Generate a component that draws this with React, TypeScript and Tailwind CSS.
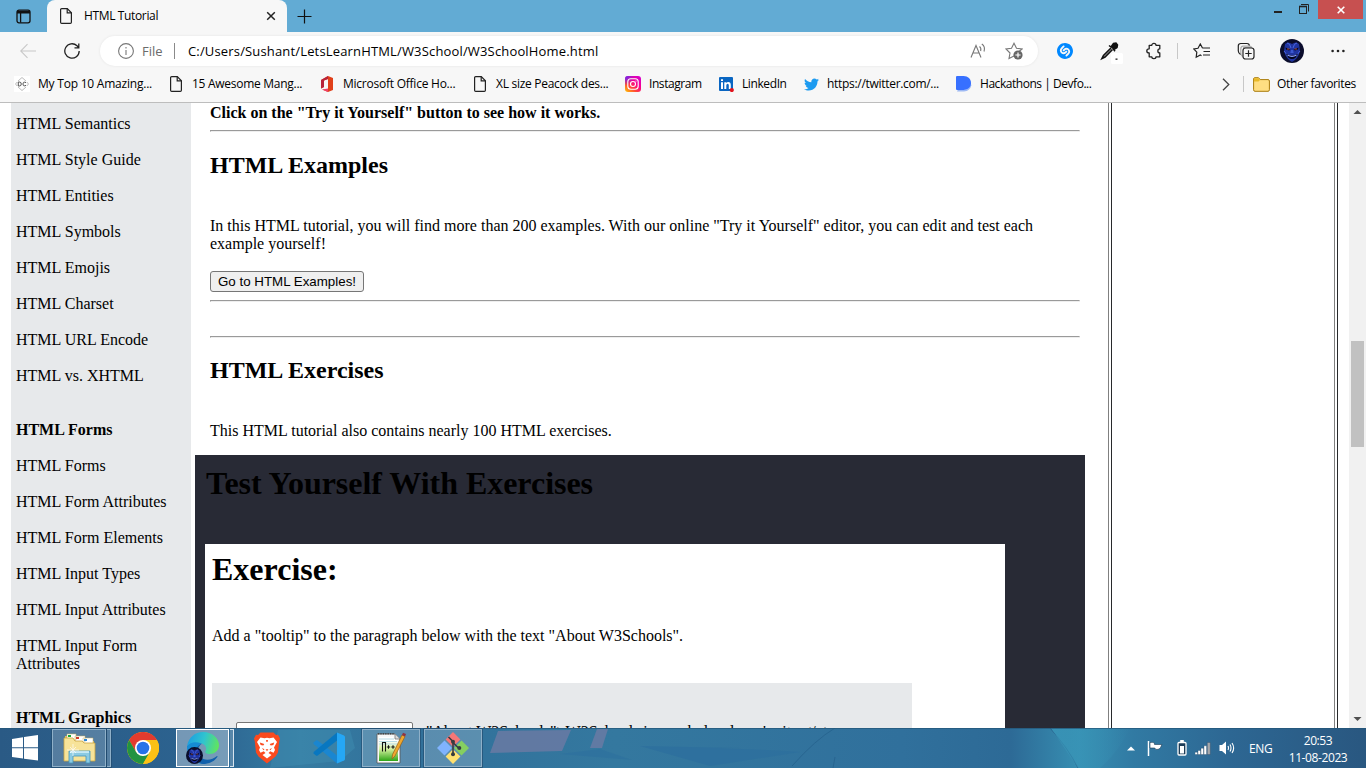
import React from "react";
import { SiShazam } from "react-icons/si";
import { FaTwitter } from "react-icons/fa";

const PageIcon = () => (
  <svg width="16" height="16" viewBox="0 0 16 16" fill="none" stroke="#222" strokeWidth="1.2">
    <path d="M2.6 1.8Q2.6.7 3.7.7H9.3L13.4 4.8V14.2Q13.4 15.3 12.3 15.3H3.7Q2.6 15.3 2.6 14.2Z" />
    <path d="M9.2.8V4.9H13.3" />
  </svg>
);

const OfficeIcon = () => (
  <svg width="16" height="16" viewBox="0 0 16 16">
    <path d="M9 0L14 2V14L9 16 3 13.6 9 14V3L5 4.4V11L2 12.6V4Z" fill="#e0401a" />
    <path d="M9 0L2 4V12.6L5 11V4.4L9 3Z" fill="#b8233a" />
    <path d="M3 13.6L9 12.6V16Z" fill="#f0406a" />
  </svg>
);

const InstagramIcon = () => (
  <svg width="16" height="16" viewBox="0 0 16 16">
    <defs>
      <linearGradient id="ig" x1="0" y1="1" x2="0.8" y2="0">
        <stop offset="0" stopColor="#ffc800" />
        <stop offset=".35" stopColor="#ff4a38" />
        <stop offset=".65" stopColor="#f9008c" />
        <stop offset="1" stopColor="#d800c8" />
      </linearGradient>
      <radialGradient id="ig2" cx="0" cy="0" r=".6">
        <stop offset="0" stopColor="#5a2cff" />
        <stop offset="1" stopColor="#5a2cff" stopOpacity="0" />
      </radialGradient>
    </defs>
    <rect width="16" height="16" rx="3" fill="url(#ig)" />
    <rect width="16" height="16" rx="3" fill="url(#ig2)" />
    <rect x="2.8" y="2.8" width="10.4" height="10.4" rx="3" fill="none" stroke="#fff" strokeWidth="1.1" />
    <circle cx="8" cy="8" r="2.5" fill="none" stroke="#fff" strokeWidth="1.1" />
    <circle cx="11" cy="5" r=".6" fill="#fff" />
  </svg>
);

const LinkedInIcon = () => (
  <svg width="16" height="16" viewBox="0 0 16 16">
    <rect x="1" y="1" width="14" height="14" rx="1" fill="#0a66c2" />
    <path d="M3 6.2H5V13H3ZM3 3.2H5V5.1H3ZM6.3 6.2H8.2V7.1Q8.8 6 10.3 6 12.8 6 12.8 9V13H10.8V9.3Q10.8 7.8 9.7 7.8 8.3 7.8 8.3 9.5V13H6.3Z" fill="#fff" />
    <circle cx="13.8" cy="14" r="2.1" fill="#e1131d" />
  </svg>
);

const DevfolioIcon = () => (
  <svg width="16" height="16" viewBox="0 0 16 16">
    <path d="M2 13.5L1 15.5H8Q14 15 15.5 9L14.6 8Q13 14 8 14Z" fill="#9db9f4" />
    <path d="M0 1Q0 0 1 0H7.5C12 0 15 3 15 7S12 14 7.5 14H1Q0 14 0 13Z" fill="#3770ff" />
  </svg>
);

const DcIcon = () => (
  <svg width="16" height="16" viewBox="0 0 16 16" fill="none">
    <rect width="16" height="16" fill="#fff" />
    <path d="M4 5L8 1.5 12 5M4 11L8 14.5 12 11M3.2 6L1.5 8 3.2 10M12.8 6L14.5 8 12.8 10" stroke="#aaa" strokeWidth=".8" />
    <path d="M4.3 6V10H5.3Q7.3 10 7.3 8T5.3 6ZM12 6.6Q9 5.2 9 8T12 9.4" stroke="#555" strokeWidth="1" />
  </svg>
);

const bookmarks: { label: string; icon: React.ReactNode; cls: string; text: string }[] = [
  { label: "My Top 10 Amazing...", icon: <DcIcon />, cls: "w-[154px]", text: "tracking-[-0.22px]" },
  { label: "15 Awesome Mang...", icon: <PageIcon />, cls: "w-[151px]", text: "tracking-[-0.28px]" },
  { label: "Microsoft Office Ho...", icon: <OfficeIcon />, cls: "w-[153px]", text: "tracking-[-0.24px]" },
  { label: "XL size Peacock des...", icon: <PageIcon />, cls: "w-[153px]", text: "tracking-[-0.28px]" },
  { label: "Instagram", icon: <InstagramIcon />, cls: "w-[93px]", text: "tracking-[-0.42px]" },
  { label: "LinkedIn", icon: <LinkedInIcon />, cls: "w-[85px]", text: "tracking-[-0.4px]" },
  { label: "https://twitter.com/...", icon: <FaTwitter size={15} color="#1d9bf0" />, cls: "w-[153px]", text: "tracking-[-0.3px]" },
  { label: "Hackathons | Devfo...", icon: <DevfolioIcon />, cls: "w-[262px]", text: "tracking-[-0.46px]" },
];

const BlueFace = ({ size }: { size: number }) => (
  <svg width={size} height={size} viewBox="0 0 24 24">
    <circle cx="12" cy="12" r="12" fill="#0b0d2c" />
    <path d="M5 5Q8 2 12 5 16 2 19 5L20 12Q18 20 12 23 6 20 4 12Z" fill="#2034a0" />
    <path d="M7 4Q10 4 11 9M17 4Q14 4 13 9M4 12Q7 15 8 18M20 12Q17 15 16 18" stroke="#4a66e0" strokeWidth="1" fill="none" />
    <path d="M5.5 8.5L10.5 10.5 9 11.5 6 10.5ZM18.5 8.5L13.5 10.5 15 11.5 18 10.5Z" fill="#04051a" />
    <path d="M7 10H9.5M14.5 10H17" stroke="#c2583c" strokeWidth=".9" />
    <path d="M11 11L10.3 14H13.7L13 11" fill="#3c58d0" />
    <path d="M6 14.5Q12 18.5 18 14.5 16 20 12 20T6 14.5Z" fill="#04051a" />
    <path d="M7.5 16Q12 18.7 16.5 16" stroke="#8fa4ff" strokeWidth="1.2" fill="none" />
  </svg>
);

const TitleBar = () => (
  <div className="flex h-8 bg-[#62abd4]">
    <div className="flex w-[47px] items-center justify-center">
      <svg width="15" height="15" viewBox="0 0 15 15" fill="none" stroke="#111" strokeWidth="1.3">
        <rect x="1" y="1.2" width="13" height="12.6" rx="2" />
        <path d="M1 3.2H14" strokeWidth="2.6" />
        <path d="M4.6 4V13.6" />
      </svg>
    </div>
    <div className="flex w-60 items-center rounded-t-lg bg-[#f7f7f7] pl-[11px]">
      <PageIcon />
      <span className="ml-[10px] w-[182px] text-[12px] tracking-[-0.36px]">HTML Tutorial</span>
      <svg width="10" height="10" viewBox="0 0 10 10" stroke="#222" strokeWidth="1.5"><path d="M1.2 1.2L8.8 8.8M8.8 1.2L1.2 8.8" /></svg>
    </div>
    <div className="flex grow items-center pl-[10px]">
      <svg width="15" height="15" viewBox="0 0 15 15" stroke="#111" strokeWidth="1.2"><path d="M7.5.5V14.5M.5 7.5H14.5" /></svg>
    </div>
    <div className="flex h-[19px]">
      <svg className="mr-[17px]" width="8" height="19" viewBox="0 0 8 19" fill="#222"><rect y="11" width="8" height="2" /></svg>
      <svg className="mr-[9px]" width="10" height="19" viewBox="0 0 10 19" fill="none" stroke="#222"><path d="M2 4.5H9.5V11.5" /><rect x=".5" y="6.5" width="7" height="7" /><path d="M0 6.5H8" strokeWidth="1.6" /></svg>
      <div className="flex w-[45px] items-center justify-center bg-[#c75050]">
        <svg width="8" height="8" viewBox="0 0 8 8" stroke="#fff" strokeWidth="1.6"><path d="M.7.7L7.3 7.3M7.3.7L.7 7.3" /></svg>
      </div>
      <div className="w-[3px]" />
    </div>
  </div>
);

const Toolbar = () => (
  <div className="flex h-[38px] items-center bg-[#f7f7f7]">
    <div className="flex w-[100px] items-center pl-5">
      <svg width="16" height="16" viewBox="0 0 16 16" fill="none" stroke="#c8c8c8" strokeWidth="1.1"><path d="M16 8H.8M7.5 1.2L.7 8 7.5 14.8" /></svg>
      <svg className="ml-7" width="16" height="16" viewBox="0 0 16 16" fill="none" stroke="#222" strokeWidth="1.3"><path d="M15.2 8A7.2 7.2 0 1 1 13 2.8L14.6 4.5M14.8.5V4.8H10.5" /></svg>
    </div>
    <div className="flex h-[30px] w-[938px] items-center rounded-full bg-white pl-[18px] text-[13px] shadow-[0_0_3px_rgba(0,0,0,0.08)]">
      <svg width="16" height="16" viewBox="0 0 16 16" fill="none" stroke="#777" strokeWidth="1.1"><circle cx="8" cy="8" r="7.4" /><path d="M8 7V12M8 4V5.4" /></svg>
      <span className="ml-2 w-8 pt-[2px] text-[#6b6b6b]">File</span>
      <div className="h-4 w-px bg-[#8a8a8a]" />
      <span className="ml-[13px] w-[782px] pt-[2px] tracking-[0.16px]">C:/Users/Sushant/LetsLearnHTML/W3School/W3SchoolHome.html</span>
      <svg width="17" height="16" viewBox="0 0 17 16" fill="none" stroke="#777" strokeWidth="1.1"><path d="M1 14.5L6 2.5 11 14.5M3 10H9M9.5 3.5Q11.5 5 10.6 8M11.8 1Q15.6 3.5 14 8.5" /></svg>
      <svg className="ml-[18px]" width="18" height="18" viewBox="0 0 18 18"><path d="M9 14L4 16.5 5 11 1 7 6.5 6.2 9 1.3 11.5 6.2 17 7 14 9.5" fill="none" stroke="#777" strokeWidth="1.1" /><circle cx="13" cy="13" r="4.6" fill="#666" /><path d="M13 10.4V15.6M10.4 13H15.6" stroke="#fff" strokeWidth="1.2" /></svg>
    </div>
    <div className="ml-[5px] flex w-11 justify-center"><SiShazam size={16} color="#0088ff" /></div>
    <div className="ml-px flex w-11 justify-center">
      <svg width="26" height="26" viewBox="0 0 26 26"><path d="M14 10L6.5 17.5 5 20.5 8 19 15.5 11.5" fill="#ccc" stroke="#111" strokeWidth="1.6" /><path d="M12 7.5L14 9 16.5 5.5 19 5 20.5 7 20 9.5 16.8 11.6 18 13.2" fill="#111" stroke="#111" strokeWidth="1.5" /><rect x="14" y="15" width="12" height="11" rx="1.5" fill="#fff" /><rect x="18.5" y="20.5" width="2" height="1.3" fill="#222" /></svg>
    </div>
    <div className="flex w-11 justify-center">
      <svg width="18" height="18" viewBox="0 0 18 18" fill="none" stroke="#222" strokeWidth="1.3" strokeLinejoin="round"><path d="M4.2 3.3H6.8C6.8.8 11 .8 11 3.3H14.8V6.8C12.2 6.8 12.2 11 14.8 11V14.8H11C11 17.3 6.8 17.3 6.8 14.8H4.2V11C1 11 1 6.8 4.2 6.8Z" /></svg>
    </div>
    <div className="ml-px h-4 w-px bg-[#c8c8c8]" />
    <div className="ml-[2px] flex w-11 justify-center">
      <svg width="18" height="16" viewBox="0 0 18 16" fill="none" stroke="#222" strokeWidth="1.2"><path d="M9.6 5.2L7.3 1 5 5.3.8 6 3.8 9.2 3.2 14.2 7.3 12 8.5 12.7M9.7 5H17M10.5 8.5H17M10 12H17" /></svg>
    </div>
    <div className="flex w-11 justify-center">
      <svg width="18" height="18" viewBox="0 0 18 18" fill="none" stroke="#222" strokeWidth="1.2"><path d="M3.5 12.5Q1.5 11.5 1.3 9V3.8Q1.4 1.5 3.8 1.5H10Q12 1.5 12.5 3.5" /><path d="M6 5.5H14M5.5 14.5Q3.8 13.5 3.8 11V7Q3.8 4.2 6.2 4.2H12.5Q14.2 4.2 14.8 6" opacity=".35" /><rect x="6" y="6" width="11" height="11" rx="2.5" fill="#f7f7f7" /><path d="M11.5 8.3V14.7M8.3 11.5H14.7" /></svg>
    </div>
    <div className="ml-[2px] flex w-11 justify-center"><BlueFace size={24} /></div>
    <div className="ml-[2px] flex w-11 justify-center">
      <svg width="14" height="4" viewBox="0 0 14 4" fill="#222"><circle cx="1.6" cy="2" r="1.3" /><circle cx="7" cy="2" r="1.3" /><circle cx="12.4" cy="2" r="1.3" /></svg>
    </div>
  </div>
);

const BookmarkBar = () => (
  <div className="flex h-[33px] items-center border-b border-[#bdbdbd] bg-[#f7f7f7] pb-1 pl-[14px] text-[12px] whitespace-nowrap">
    {bookmarks.map((b) => (
      <div key={b.label} className={`flex shrink-0 items-center ${b.cls}`}>
        <span className="mr-2 flex w-4 justify-center">{b.icon}</span>
        <span className={b.text}>{b.label}</span>
      </div>
    ))}
    <svg className="ml-1" width="8" height="13" viewBox="0 0 8 13" fill="none" stroke="#444" strokeWidth="1.3"><path d="M1 .7L6.8 6.5 1 12.3" /></svg>
    <div className="ml-[13px] h-4 w-px bg-[#c8c8c8]" />
    <svg className="ml-[9px]" width="17" height="15" viewBox="0 0 17 15"><path d="M.6 2Q.6.7 2 .7H5.5L7.2 2.6H15Q16.4 2.6 16.4 4V12.8Q16.4 14.3 15 14.3H2Q.6 14.3.6 12.8Z" fill="#ffde82" stroke="#a97c0c" strokeWidth="1" /><path d="M1 1.2H5.5L7 2.9 5.5 4.6H1Z" fill="#e8b928" /></svg>
    <span className="ml-[7px] tracking-[-0.36px]">Other favorites</span>
  </div>
);

const sidebarTop = ["HTML Semantics", "HTML Style Guide", "HTML Entities", "HTML Symbols", "HTML Emojis", "HTML Charset", "HTML URL Encode", "HTML vs. XHTML"];
const sidebarForms = ["HTML Forms", "HTML Form Attributes", "HTML Form Elements", "HTML Input Types", "HTML Input Attributes", "HTML Input Form Attributes"];

const Sidebar = () => (
  <nav className="ml-[11px] flex w-[180px] shrink-0 flex-col gap-[18px] bg-[#e7e9eb] px-[5px] pt-3">
    {sidebarTop.map((s) => <div key={s}>{s}</div>)}
    <div className="mt-[18px] font-bold">HTML Forms</div>
    {sidebarForms.map((s) => <div key={s} className="w-[155px]">{s}</div>)}
    <div className="mt-[18px] font-bold">HTML Graphics</div>
  </nav>
);

const Rule = ({ cls }: { cls: string }) => (
  <div className={`h-[2px] w-[870px] border border-t-[#9a9a9a] border-r-[#eee] border-b-[#eee] border-l-[#9a9a9a] ${cls}`} />
);

const Main = () => (
  <main className="ml-1 w-[890px] shrink-0">
    <div className="h-[352px] pt-px pl-[15px]">
      <p className="font-bold">Click on the "Try it Yourself" button to see how it works.</p>
      <Rule cls="mt-2" />
      <h2 className="mt-5 text-[24px] leading-[27px] font-bold">HTML Examples</h2>
      <p className="mt-[38px] w-[850px]">In this HTML tutorial, you will find more than 200 examples. With our online "Try it Yourself" editor, you can edit and test each example yourself!</p>
      <button className="mt-[18px] block h-[21px] w-[154px] rounded-[3px] border border-[#767676] bg-[#efefef] text-center font-['Liberation_Sans',sans-serif] text-[13.333px] leading-[19px] whitespace-nowrap">Go to HTML Examples!</button>
      <Rule cls="mt-2" />
      <Rule cls="mt-[34px]" />
      <h2 className="mt-[19px] text-[24px] leading-[27px] font-bold">HTML Exercises</h2>
      <p className="mt-[38px]">This HTML tutorial also contains nearly 100 HTML exercises.</p>
    </div>
    <section className="h-[300px] bg-[#282a35] pt-[10px] pl-[10px]">
      <h1 className="pl-px text-[32px] leading-[37px] font-bold tracking-[-0.03px]">Test Yourself With Exercises</h1>
      <div className="mt-[42px] h-[220px] w-[800px] bg-white pt-[7px] pl-[7px]">
        <h1 className="text-[32px] leading-[37px] font-bold">Exercise:</h1>
        <p className="mt-[39px]">Add a "tooltip" to the paragraph below with the text "About W3Schools".</p>
        <div className="mt-[38px] flex h-[120px] w-[700px] items-start bg-[#e7e9eb] pt-[39px] pl-6">
          <div className="h-[21px] w-[177px] rounded-[2px] border border-[#767676] bg-white" />
          <span className="ml-1 pt-px whitespace-nowrap">="About W3Schools"&gt;W3Schools is a web developer's site.&lt;/p&gt;</span>
        </div>
      </div>
    </section>
  </main>
);

const ScrollBar = () => (
  <div className="ml-auto flex w-[17px] shrink-0 flex-col items-center bg-[#f1f1f1]">
    <svg width="17" height="17" viewBox="0 0 17 17" fill="#505050"><path d="M4.5 11L8.5 7 12.5 11Z" /></svg>
    <div className="mt-[221px] mr-px h-[106px] w-[13px] bg-[#c1c1c1]" />
    <svg className="mt-auto" width="17" height="17" viewBox="0 0 17 17" fill="#505050"><path d="M4.5 6L8.5 10 12.5 6Z" /></svg>
  </div>
);

const TaskArt = () => (
  <svg className="absolute inset-0" width="1366" height="40" viewBox="0 0 1366 40" preserveAspectRatio="none">
    <defs>
      <linearGradient id="tb" x1="0" x2="1" y1="0" y2="0">
        <stop offset="0" stopColor="#2a5a85" />
        <stop offset=".15" stopColor="#2c6390" />
        <stop offset=".22" stopColor="#367ca2" />
        <stop offset=".3" stopColor="#31709a" />
        <stop offset=".45" stopColor="#34789f" />
        <stop offset=".66" stopColor="#30709c" />
        <stop offset=".74" stopColor="#2d6a96" />
        <stop offset=".79" stopColor="#378fb2" />
        <stop offset=".83" stopColor="#317aa3" />
        <stop offset=".9" stopColor="#2d6793" />
        <stop offset="1" stopColor="#295780" />
      </linearGradient>
      <linearGradient id="tb2" x1="0" x2="1" y1="0" y2="0">
        <stop offset="0" stopColor="#3997b9" stopOpacity=".8" />
        <stop offset="1" stopColor="#3997b9" stopOpacity="0" />
      </linearGradient>
    </defs>
    <rect width="1366" height="40" fill="url(#tb)" />
    <path d="M278 2H350L355 20 340 33 270 40Z" fill="#3e8bb0" opacity=".5" />
    <path d="M498 3L571 2 562 23 490 25Z" fill="#667aa3" opacity=".9" />
    <path d="M597 1H608L602 20H590Z" fill="#667aa3" opacity=".9" />
    <path d="M640 18Q720 19 800 24L710 38Z" fill="#2d6f9e" opacity=".8" />
    <path d="M560 26L600 21 632 32Z" fill="#2d6f9e" opacity=".6" />
    <path d="M835 0Q815 12 792 38M835 29L833 40M1050 0Q1068 20 1078 40" stroke="#286590" fill="none" />
    <path d="M1051 0H1130Q1120 22 1100 40H1078Z" fill="url(#tb2)" />
    <path d="M0 .5H1366" stroke="#245678" opacity=".7" />
  </svg>
);

const TaskButton = ({ children, cls }: { children: React.ReactNode; cls: string }) => (
  <div className={`flex h-[38px] shrink-0 items-center justify-center border border-[#8fb0c8] bg-white/20 outline outline-1 outline-[#1f486b]/60 ${cls}`}>{children}</div>
);

const ExplorerIcon = () => (
  <svg width="33" height="32" viewBox="0 0 33 32">
    <path d="M2 4H12V9H31V27H2Z" fill="#e4bf5c" />
    <path d="M4 2H13V8H4ZM12 4H22V10H12ZM20 6H30V12H20Z" fill="#fff" stroke="#c9b060" strokeWidth=".5" />
    <rect x="5" y="3" width="3" height="2" fill="#1ba838" />
    <rect x="13" y="5" width="3" height="2" fill="#d03c28" />
    <rect x="21" y="7" width="3" height="2" fill="#2c88d8" />
    <path d="M1 6H10L12 9H19L21 11H32V29H1Z" fill="#f7e399" stroke="#caa53f" strokeWidth=".8" />
    <path d="M6 19H27V31H23V24H10V31H6Z" fill="#8ccbe3" stroke="#4396bb" strokeWidth=".8" />
    <path d="M7 20H26" stroke="#d8f3fb" strokeWidth="1.5" />
    <path d="M10 12V24M4 18H16M7 15L13 21M13 15L7 21" stroke="#fff" strokeWidth=".8" opacity=".85" />
  </svg>
);

const ChromeIcon = () => (
  <svg width="32" height="32" viewBox="0 0 32 32">
    <circle cx="16" cy="16" r="16" fill="#fbc116" />
    <path d="M16 8H29.9A16 16 0 0 0 2.15 8L9.1 20Z" fill="#e33b2e" />
    <path d="M2.15 8A16 16 0 0 0 16 32L22.9 20 16 24 9.1 20Z" fill="#229342" />
    <path d="M29.9 8A16 16 0 0 1 16 32L22.9 20 22 11 16 8Z" fill="#fbc116" />
    <circle cx="16" cy="16" r="8" fill="#fff" />
    <circle cx="16" cy="16" r="6.3" fill="#2672e8" />
  </svg>
);

const EdgeIcon = () => (
  <svg width="32" height="32" viewBox="0 0 32 32">
    <defs>
      <linearGradient id="eg" x1="0" x2="1" y1=".4" y2=".6"><stop offset="0" stopColor="#1c9fe0" /><stop offset=".5" stopColor="#30c4cf" /><stop offset="1" stopColor="#62e65a" /></linearGradient>
    </defs>
    <path d="M0 14C3 9 10 8.5 15 11.5 10 13 9 18 11 22 13 27 19 29 24 28 20 32 10 33 5 28 1 24 0 19 0 14Z" fill="#168bd4" />
    <path d="M15 11.5C9 16 10 23 15 26.5 20 29 26 27.5 30 24Q31 24 30.3 25C26 31 20 32 16 32 8 31 7 24 9 18 10 14 12 12.5 15 11.5Z" fill="#1160ab" />
    <path d="M0 14C2 5 8 0 16 0 26 0 32 7 32 13 32 19 27 22 23 22 19 22 17.5 20.5 18.5 19 20 17 19 13 15 11.5 9 9 3 10 0 14Z" fill="url(#eg)" />
  </svg>
);

const BraveIcon = () => (
  <svg width="28" height="32" viewBox="0 0 28 32">
    <path d="M7.5.5H20.5L23 3 25 2.8 27 6.5 26.3 9 25 20.5 22.5 24.5 14 31.5 5.5 24.5 3 20.5 1.7 9 1 6.5 3 2.8 5 3Z" fill="#fb4a1f" />
    <path d="M7.5 5.5L11.5 6.2 14 5.7 16.5 6.2 20.5 5.5 24 10 21 15.5 22 18 20.5 20.8 17.3 19.2 15.5 21 18.5 23 14 26.5 9.5 23 12.5 21 10.7 19.2 7.5 20.8 6 18 7 15.5 4 10Z" fill="#fff" />
    <path d="M6.8 10.6L11.3 12 10.3 13.6 7.6 13ZM21.2 10.6L16.7 12 17.7 13.6 20.4 13ZM9 16L11.5 17.2 10.5 18.3ZM19 16L16.5 17.2 17.5 18.3ZM12.6 17.3H15.4L14 19.2Z" fill="#fb4a1f" />
    <path d="M13 8H15L14.5 10H13.5Z" fill="#fb4a1f" />
  </svg>
);

const VsCodeIcon = () => (
  <svg width="32" height="32" viewBox="0 0 32 32">
    <path d="M.5 10.5L3 8.5Q3.8 8 4.7 8.6L24 23.5V31.5L1 12.3Q0 11.4.5 10.5Z" fill="#1a86d0" />
    <path d="M.5 21.5L3 23.5Q3.8 24 4.7 23.4L24 8.5V.5L1 19.7Q0 20.6.5 21.5Z" fill="#0877c0" />
    <path d="M24 .5L31 3.5Q32 4 32 5V27Q32 28 31 28.5L24 31.5Z" fill="#25a7f5" />
  </svg>
);

const NotepadIcon = () => (
  <svg width="32" height="32" viewBox="0 0 32 32">
    <defs><linearGradient id="np" x1="0" x2="0" y1="0" y2="1"><stop offset=".15" stopColor="#fff" /><stop offset=".5" stopColor="#d5f0a0" /><stop offset="1" stopColor="#2ea516" /></linearGradient></defs>
    <path d="M2 2H20L25 7V31H2Z" fill="#f8f8f8" stroke="#555" strokeWidth=".8" />
    <path d="M4 5H18L23 9V29H4Z" fill="url(#np)" />
    <path d="M4 7H19M4 9.5H22M4 12H22" stroke="#b8dbe4" strokeWidth="1" />
    <path d="M3 1.8H19" stroke="#444" strokeWidth="1.6" strokeDasharray="1.2 1.2" />
    <path d="M20 2V7H25" fill="#ddd" stroke="#666" strokeWidth=".7" />
    <path d="M7.5 19.5V10.5H10.5V19.5M11.8 15H15.2M13.5 13.2V16.8M16.3 15H19.7M18 13.2V16.8" stroke="#111" strokeWidth="1.1" fill="none" />
    <path d="M27 3L30 4.5 20 24 17 27 17.5 22.5Z" fill="#f0a72e" stroke="#95601a" strokeWidth=".7" />
    <path d="M27 3L28 .8 31 2 30 4.5Z" fill="#913341" />
  </svg>
);

const GitIcon = () => (
  <svg width="32" height="32" viewBox="0 0 32 32">
    <path d="M16 0L23.4 7.4 16 14.8 8.6 7.4Z" fill="#f47777" />
    <path d="M7.5 8.5L15 16 7.5 23.5 0 16Z" fill="#80b3ff" />
    <path d="M24.5 8.5L32 16 24.5 23.5 17 16Z" fill="#85cf60" />
    <path d="M16 17.2L23.4 24.6 16 32 8.6 24.6Z" fill="#ffe070" />
    <path d="M11.5 5L16 9.5V22.5M16 10.5L21.5 16" stroke="#373b40" strokeWidth="1.6" fill="none" />
    <circle cx="16" cy="9.8" r="2" fill="#373b40" /><circle cx="22.3" cy="16" r="2" fill="#373b40" /><circle cx="16" cy="22.3" r="2" fill="#373b40" />
  </svg>
);

const Taskbar = () => (
  <footer className="relative h-10 overflow-hidden bg-[#2d6793]">
    <TaskArt />
    <div className="relative flex h-full items-center text-white">
      <svg className="ml-3" width="26" height="26" viewBox="0 0 26 26" fill="#fff"><path d="M0 4L11 2.2V12.3H0ZM12 2L26 0V12.3H12ZM0 13.3H11V23.6L0 22ZM12 13.3H26V25.5L12 23.7Z" /></svg>
      <TaskButton cls="ml-[14px] w-[54px]"><ExplorerIcon /></TaskButton>
      <TaskButton cls="w-1 border-l-0 ml-px"><span /></TaskButton>
      <div className="ml-4 flex w-8"><ChromeIcon /></div>
      <div className="relative ml-[17px] flex h-[38px] w-[53px] items-center justify-center border border-white bg-white/35">
        <EdgeIcon />
        <div className="absolute bottom-[2px] left-[9px]"><BlueFace size={17} /></div>
      </div>
      <div className="ml-px h-[38px] w-1 border border-l-0 border-[#d8e4ee] bg-white/20" />
      <div className="ml-[17px] flex w-8 justify-center"><BraveIcon /></div>
      <div className="ml-[30px] flex w-8"><VsCodeIcon /></div>
      <TaskButton cls="ml-[17px] w-[58px]"><NotepadIcon /></TaskButton>
      <TaskButton cls="ml-1 w-[58px]"><GitIcon /></TaskButton>
      <svg className="ml-[645px]" width="8" height="5" viewBox="0 0 8 5" fill="#fff"><path d="M0 4.5L4 .5 8 4.5Z" /></svg>
      <svg className="ml-[11px]" width="18" height="18" viewBox="0 0 18 18"><path d="M2.5 2V17" stroke="#fff" strokeWidth="1.5" /><path d="M4 3.5Q6.5 3 8.5 4V5.5H16L14.5 8.5Q13.5 10.5 11 10.5 9 10.5 8.8 9H4Z" fill="#fff" stroke="#1b3b55" strokeWidth=".6" /></svg>
      <svg className="ml-[13px]" width="10" height="16" viewBox="0 0 10 16"><rect x="1" y="2.5" width="8" height="12.5" rx="1" fill="#1d3d58" stroke="#fff" strokeWidth="1.3" /><rect x="3.2" y="0" width="3.6" height="2" fill="#fff" /><rect x="3" y="6" width="4" height="7.5" fill="#fff" /></svg>
      <svg className="ml-[8px]" width="16" height="14" viewBox="0 0 16 14"><path d="M0 11.2H2.6V13.5H0ZM3 9.5H5.6V13.5H3ZM6 7.2H8.6V13.5H6ZM9 4.8H11.6V13.5H9Z" fill="#fff" stroke="#1b3b55" strokeWidth=".3" /><path d="M12.3 1.5H15.3V13.5H12.3Z" fill="#a5a8ac" stroke="#1b3b55" strokeWidth=".3" /></svg>
      <svg className="ml-[8px]" width="16" height="16" viewBox="0 0 16 16"><path d="M.5 5H3L7 1.5V14.5L3 11H.5Z" fill="#fff" /><path d="M9 6Q10 8 9 10M11 4.5Q13 8 11 11.5M13 3Q16.3 8 13 13" stroke="#fff" strokeWidth="1.1" fill="none" /></svg>
      <span className="ml-[14px] w-6 pt-px text-[12px] tracking-[-0.33px]">ENG</span>
      <div className="ml-[14px] flex w-[62px] flex-col items-center pt-[2px] text-[12px] leading-[17px] tracking-[-0.4px] whitespace-nowrap">
        <span>20:53</span>
        <span>11-08-2023</span>
      </div>
    </div>
  </footer>
);

export default function App() {
  return (
    <div className="flex h-[768px] w-[1366px] flex-col overflow-hidden bg-white font-['Open_Sans','Noto_Sans',sans-serif] text-black">
      <TitleBar />
      <Toolbar />
      <BookmarkBar />
      <div className="flex h-[625px] overflow-hidden bg-white font-['Liberation_Serif',serif] text-[16px] leading-[18px]">
        <Sidebar />
        <Main />
        <div className="ml-[23px] w-1 shrink-0 border-r border-l border-r-[#282a2c] border-l-[#808080]" />
        <div className="ml-[222px] w-1 shrink-0 border-r border-l border-r-[#282a2c] border-l-[#808080]" />
        <ScrollBar />
      </div>
      <Taskbar />
    </div>
  );
}
